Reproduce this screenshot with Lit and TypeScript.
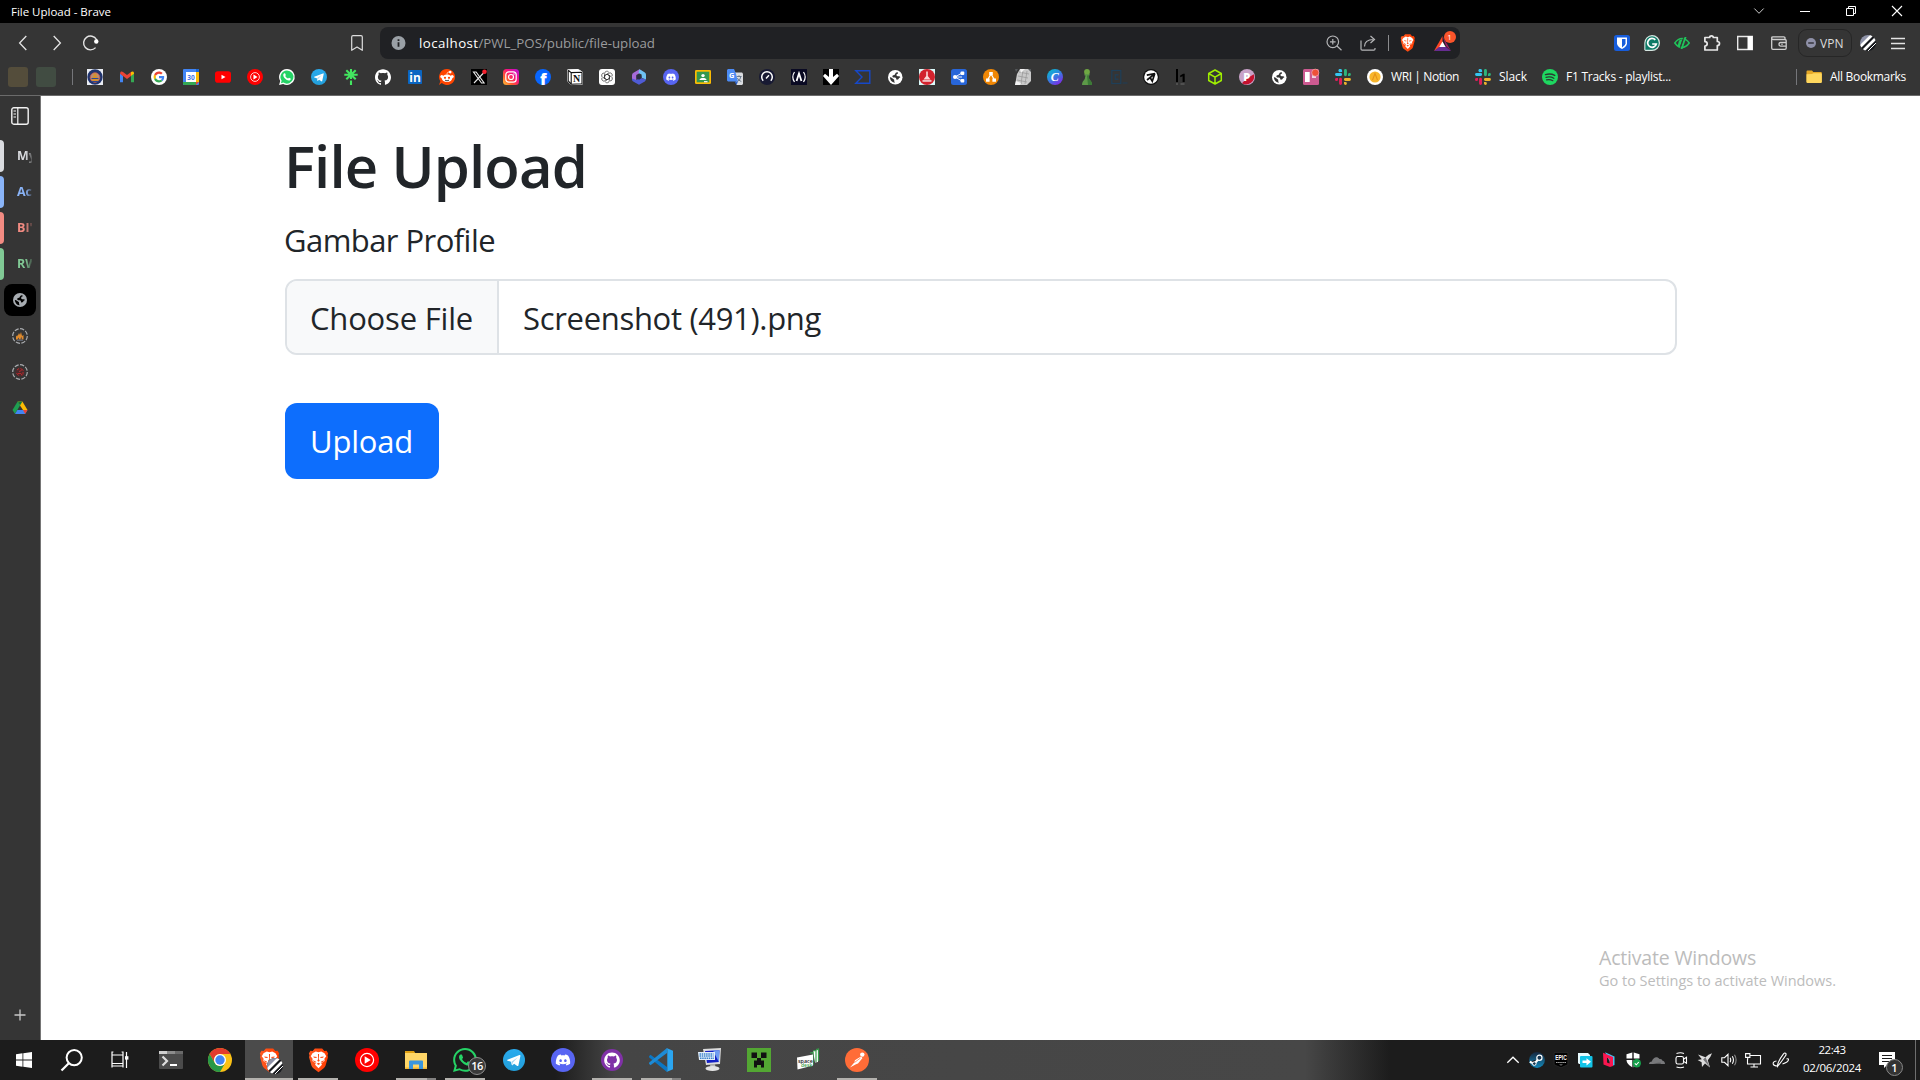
import { LitElement, html, svg, css, nothing } from "lit";
import type { SVGTemplateResult, TemplateResult } from "lit";
import { customElement, property } from "lit/decorators.js";
import { classMap } from "lit/directives/class-map.js";

/** Inline run of text whose tracking is adjusted so that it takes a given width. */
@customElement("fit-text")
class FitText extends LitElement {
  @property({ type: Number }) w = 0;

  static styles = css`
    :host {
      display: inline-block;
      white-space: pre;
    }
  `;

  firstUpdated() {
    const n = (this.textContent ?? "").length;
    const natural = this.getBoundingClientRect().width;
    if (this.w && n) this.style.letterSpacing = `${((this.w - natural) / n).toFixed(3)}px`;
  }

  render() {
    return html`<slot></slot>`;
  }
}

const icon = (w: number, h: number, box: string, body: SVGTemplateResult): TemplateResult =>
  html`<svg width=${w} height=${h} viewBox=${box}>${body}</svg>`;

/* ---------- shared brand marks ---------- */

const GITHUB =
  "M12 .297c-6.63 0-12 5.373-12 12 0 5.303 3.438 9.8 8.205 11.385.6.113.82-.258.82-.577 0-.285-.01-1.04-.015-2.04-3.338.724-4.042-1.61-4.042-1.61C4.422 18.07 3.633 17.7 3.633 17.7c-1.087-.744.084-.729.084-.729 1.205.084 1.838 1.236 1.838 1.236 1.07 1.835 2.809 1.305 3.495.998.108-.776.417-1.305.76-1.605-2.665-.3-5.466-1.332-5.466-5.93 0-1.31.465-2.38 1.235-3.22-.135-.303-.54-1.523.105-3.176 0 0 1.005-.322 3.3 1.23.96-.267 1.98-.399 3-.405 1.02.006 2.04.138 3 .405 2.28-1.552 3.285-1.23 3.285-1.23.645 1.653.24 2.873.12 3.176.765.84 1.23 1.91 1.23 3.22 0 4.61-2.805 5.625-5.475 5.92.42.36.81 1.096.81 2.22 0 1.606-.015 2.896-.015 3.286 0 .315.21.69.825.57C20.565 22.092 24 17.592 24 12.297c0-6.627-5.373-12-12-12";
const WHATSAPP =
  "M17.472 14.382c-.297-.149-1.758-.867-2.03-.967-.273-.099-.471-.148-.67.15-.197.297-.767.966-.94 1.164-.173.199-.347.223-.644.075-.297-.15-1.255-.463-2.39-1.475-.883-.788-1.48-1.761-1.653-2.059-.173-.297-.018-.458.13-.606.134-.133.298-.347.446-.52.149-.174.198-.298.298-.497.099-.198.05-.371-.025-.52-.075-.149-.669-1.612-.916-2.207-.242-.579-.487-.5-.669-.51-.173-.008-.371-.01-.57-.01-.198 0-.52.074-.792.372-.272.297-1.04 1.016-1.04 2.479 0 1.462 1.065 2.875 1.213 3.074.149.198 2.096 3.2 5.077 4.487.709.306 1.262.489 1.694.625.712.227 1.36.195 1.871.118.571-.085 1.758-.719 2.006-1.413.248-.694.248-1.289.173-1.413-.074-.124-.272-.198-.57-.347m-5.421 7.403h-.004a9.87 9.87 0 01-5.031-1.378l-.361-.214-3.741.982.998-3.648-.235-.374a9.86 9.86 0 01-1.51-5.26c.001-5.45 4.436-9.884 9.888-9.884 2.64 0 5.122 1.03 6.988 2.898a9.825 9.825 0 012.893 6.994c-.003 5.45-4.437 9.884-9.885 9.884m8.413-18.297A11.815 11.815 0 0012.05 0C5.495 0 .16 5.335.157 11.892c0 2.096.547 4.142 1.588 5.945L.057 24l6.305-1.654a11.882 11.882 0 005.683 1.448h.005c6.554 0 11.89-5.335 11.893-11.893a11.821 11.821 0 00-3.48-8.413Z";
const DISCORD =
  "M20.317 4.37a19.79 19.79 0 00-4.885-1.515.074.074 0 00-.079.037c-.21.375-.444.865-.608 1.25-1.845-.277-3.68-.277-5.487 0-.164-.394-.406-.875-.618-1.25a.077.077 0 00-.079-.037 19.736 19.736 0 00-4.885 1.515.07.07 0 00-.032.028C.533 9.046-.319 13.58.099 18.058a.082.082 0 00.031.056c2.053 1.508 4.041 2.423 5.993 3.03a.078.078 0 00.084-.028c.462-.63.873-1.295 1.226-1.994a.076.076 0 00-.042-.106c-.652-.248-1.274-.55-1.872-.892a.077.077 0 01-.008-.128c.126-.094.252-.192.372-.291a.074.074 0 01.078-.01c3.927 1.793 8.18 1.793 12.061 0a.074.074 0 01.079.009c.12.099.246.198.373.292a.077.077 0 01-.007.128 12.299 12.299 0 01-1.873.891.077.077 0 00-.041.107c.36.698.772 1.363 1.225 1.993a.076.076 0 00.084.029c1.961-.607 3.95-1.522 6.002-3.03a.077.077 0 00.032-.055c.5-5.177-.838-9.674-3.549-13.66a.061.061 0 00-.031-.029zM8.02 15.331c-1.183 0-2.157-1.086-2.157-2.419 0-1.333.956-2.419 2.157-2.419 1.211 0 2.176 1.095 2.157 2.419 0 1.333-.956 2.419-2.157 2.419zm7.975 0c-1.183 0-2.157-1.086-2.157-2.419 0-1.333.955-2.419 2.157-2.419 1.211 0 2.176 1.095 2.157 2.419 0 1.333-.946 2.419-2.157 2.419Z";

const brave = (s: number, id: string) =>
  icon(s, s * 1.17, "1 0 22 27", svg`
    <defs><linearGradient id=${id} x1="0" x2="1"><stop offset="0" stop-color="#ff5a22"/><stop offset="1" stop-color="#ff3c00"/></linearGradient></defs>
    <path fill="url(#${id})" d="M8 .5h8l2.4 2.7 2.5-.3L22.600 6l-.7 2 .5 2.200L19.700 19.600q-.5 1.600-2 2.600L12 26.600l-5.700-4.400q-1.500-1-2-2.600L1.600 10.200l.5-2.200-.7-2 1.700-3.100 2.500.3z"/>
    <path fill="#fff" d="M12 4.800l3-.9 3.600 1.900L20.500 9l-2 2.800.2 2.600-3.700 2.300.8 1.700-3.800 3.900-3.800-3.900.8-1.700-3.700-2.300.2-2.600L3.500 9l1.900-3.200L9 3.900z"/>
    <path fill="#ff4a12" d="M6.200 9.300l4 .7-.6 1-2.600-.4zM17.800 9.300l-4 .7.600 1 2.600-.4zM11.400 6.500h1.200l-.2 6 1 1.600-1.400 1-1.400-1 1-1.600zM10 17.300l2-1 2 1-2 1.400zM6 13.500l3 1.300.5 1.500-3-1.500zM18 13.500l-3 1.300-.5 1.500 3-1.500z"/>`);

const ytMusic = (s: number) =>
  icon(s, s, "0 0 24 24", svg`<circle cx="12" cy="12" r="12" fill="#f00"/>
    <circle cx="12" cy="12" r="6.600" fill="none" stroke="#fff" stroke-width="1.200"/><path fill="#fff" d="M9.700 8.300v7.400l6-3.700z"/>`);

const telegram = (s: number, id: string) =>
  icon(s, s, "0 0 24 24", svg`
    <defs><linearGradient id=${id} x1="0" x2="0" y1="0" y2="1"><stop offset="0" stop-color="#2aabee"/><stop offset="1" stop-color="#229ed9"/></linearGradient></defs>
    <circle cx="12" cy="12" r="12" fill="url(#${id})"/>
    <path fill="#fff" d="M4.800 11.800L18 6.600c.7-.2 1.200.2 1 1.100l-2.200 10.200c-.2.800-.7.900-1.300.6l-3.400-2.500-1.700 1.600c-.4.400-.8.300-.9-.3l-.8-3.400-3.700-1.200c-.7-.2-.7-.6-.2-.9z"/>
    <path fill="#a9d5ee" d="M9.200 14l7-5-5.600 6-.4 2.600z"/>`);

const discord = (s: number) =>
  icon(s, s, "0 0 24 24", svg`<circle cx="12" cy="12" r="12" fill="#5865f2"/>
    <path transform="translate(4.800 4.900) scale(.6)" fill="#fff" d=${DISCORD}/>`);

const slack = () =>
  icon(16, 16, "0 0 16 16", svg`
    <path fill="#36c5f0" d="M4.300 0h1.400a1.500 1.500 0 0 1 1.400 1.500v1.400H5.700A1.400 1.400 0 0 1 4.300 0zM1.500 4h4.200a1.450 1.450 0 0 1 0 2.900H1.500a1.450 1.450 0 0 1 0-2.900z"/>
    <path fill="#2eb67d" d="M9 1.500a1.450 1.450 0 0 1 2.900 0v4.200a1.450 1.450 0 0 1-2.900 0zM13 5.600a1.450 1.450 0 1 1 1.500 1.300H13z"/>
    <path fill="#ecb22e" d="M10.400 9.100h4.100a1.450 1.450 0 0 1 0 2.900h-4.100a1.450 1.450 0 0 1 0-2.900zM9 13h1.400A1.450 1.450 0 1 1 9 14.500z"/>
    <path fill="#e01e5a" d="M4.100 10.300a1.450 1.450 0 0 1 2.900 0v4.200a1.450 1.450 0 0 1-2.900 0zM0 10.500a1.450 1.450 0 0 1 1.500-1.400H3v1.400a1.500 1.500 0 0 1-3 0z"/>`);

const stripes = (s: number) =>
  icon(s, s, "0 0 16 16", svg`
    <defs><clipPath id="ball"><circle cx="8" cy="8" r="8"/></clipPath></defs>
    <g clip-path="url(#ball)"><rect width="16" height="16" fill="#17191d"/><path fill="#8f93a8" d="M0 0h12L0 12z"/>
    <path stroke="#fff" stroke-width="2.800" d="M-1 13L13-1M2.500 16.500L17 2"/><path stroke="#fff" stroke-width="1" d="M7 17L18 6"/></g>`);

const globe = (s: number, color: string, water: string) =>
  icon(s, s, "0 0 16 16", svg`<circle cx="8" cy="8" r="8" fill=${color}/>
    <path fill=${water} d="M10.600 2.300Q8 3 7.800 4.400T5.600 5.800q-1.300.6-.6 1.800.8.800 2.300.6 1.500-.1 1.700 1.100l.3 1.200q.9.600 2.100-.2.600-1.800 2.300-2.300-.3-1-1.700-1H10.600q-1.500-.3-1.300-1.700.2-1 1.700-1.200zM2 8.300q.6-.5 1.600 0l2.600 1.800q.9.500.7 1.700t.9 2.300q-4.800-.4-5.800-5.800z"/>`);

/* ---------- bookmarks bar ---------- */

const b = (body: SVGTemplateResult) => icon(16, 16, "0 0 16 16", body);

const bookmarks: TemplateResult[] = [
  b(svg`<rect width="16" height="16" fill="#e9ecf2"/><circle cx="8" cy="8" r="7.700" fill="#21356e"/><circle cx="8" cy="8.500" r="4.800" fill="#b98d78"/><circle cx="8" cy="8.500" r="4.800" fill="none" stroke="#c9584b" stroke-width=".8"/><path fill="#d6922a" d="M6.500 4.500h3v3l1.300 1v3.500H5.200V8.500l1.300-1z"/><path stroke="#2d4694" d="M4.500 9.500h7M5 12.500h6"/>`),
  b(svg`<path fill="#4285f4" d="M1 13.200V4.500l3 2.300v6.400z"/><path fill="#34a853" d="M12 13.200V6.800l3-2.300v8.700z"/><path fill="#ea4335" d="M1.500 3C2.500 2 3.400 2.600 4 3l4 3 4-3v4l-4 3-4-3-3-2.300z"/><path fill="#fbbc04" d="M12 3c1.500-1.200 3-.5 3 1.200v.5L12 7z"/>`),
  b(svg`<circle cx="8" cy="8" r="8" fill="#fff"/><g transform="translate(2.600 2.600) scale(.225)"><path fill="#ea4335" d="M24 9.500c3.540 0 6.710 1.220 9.210 3.600l6.850-6.850C35.900 2.380 30.470 0 24 0 14.620 0 6.510 5.380 2.560 13.220l7.980 6.190C12.430 13.720 17.740 9.500 24 9.500z"/><path fill="#4285f4" d="M46.980 24.550c0-1.570-.15-3.090-.38-4.550H24v9.020h12.940c-.58 2.960-2.260 5.480-4.780 7.180l7.730 6c4.510-4.180 7.090-10.360 7.090-17.650z"/><path fill="#fbbc05" d="M10.530 28.590c-.48-1.450-.76-2.990-.76-4.590s.27-3.140.76-4.590l-7.980-6.190C.92 16.460 0 20.120 0 24c0 3.880.92 7.540 2.560 10.780l7.970-6.190z"/><path fill="#34a853" d="M24 48c6.480 0 11.930-2.130 15.890-5.810l-7.730-6c-2.150 1.450-4.920 2.300-8.160 2.300-6.260 0-11.570-4.220-13.470-9.910l-7.980 6.190C6.510 42.620 14.620 48 24 48z"/></g>`),
  b(svg`<rect width="16" height="16" rx="1" fill="#4285f4"/><path fill="#fbbc04" d="M13 3h3v10h-3z"/><path fill="#1967d2" d="M13 0h2l1 1v2h-3z"/><path fill="#34a853" d="M0 13h13v3H1l-1-1z"/><path fill="#ea4335" d="M13 13h3l-3 3z"/><path fill="#fff" d="M3 3h10v10H3z"/><text x="8" y="10.700" class="cal">30</text>`),
  b(svg`<rect y="2.300" width="16" height="11.400" rx="2.800" fill="#f00"/><path fill="#fff" d="M6.500 5.700v4.600l4-2.300z"/>`),
  ytMusic(16),
  b(svg`<path fill="#fff" d="M8 .1a7.900 7.900 0 1 1-3.900 14.800L.1 16l1.100-4A7.900 7.900 0 0 1 8 .1z"/><path fill="#25d366" d="M8 1.400a6.600 6.600 0 1 1-3.600 12.200L1.900 14.200l.7-2.500A6.600 6.600 0 0 1 8 1.400z"/><path fill="#fff" d="M5.400 4.200c.5-.1.700 0 .9.500l.5 1.200c.1.400-.7 1-.6 1.200a5 5 0 0 0 2.700 2.400c.3.100.8-.9 1.100-.8l1.600.8c.5.300-.1 1.800-1.300 2-1.400.2-3.200-.8-4.300-2-1-1-2-2.500-1.700-3.800.1-.7.600-1.400 1.100-1.500z"/>`),
  telegram(16, "tgS"),
  b(svg`<path stroke="#43e660" stroke-width="2.100" d="M8 0v10M1.300 5.700h13.400M3.300 1.200l9.400 9M12.700 1.200l-9.400 9M8 11.500V16"/>`),
  icon(16, 16, "0 0 24 24", svg`<path fill="#fff" d=${GITHUB}/>`),
  b(svg`<rect x="1" y="1" width="14" height="14" rx=".8" fill="#0a66c2"/><text x="8" y="12.500" class="li">in</text>`),
  b(svg`<path fill="#ff4500" d="M8 0a8 8 0 1 1-5.200 14L0 16l1.300-3.700A8 8 0 0 1 8 0z"/><ellipse cx="8" cy="9.300" rx="5.200" ry="3.700" fill="#fff"/><circle cx="2.800" cy="7.500" r="1.500" fill="#fff"/><circle cx="13.200" cy="7.500" r="1.500" fill="#fff"/><circle cx="11.200" cy="3.100" r="1.300" fill="#fff"/><path fill="none" stroke="#fff" stroke-width=".8" d="M8 5.500c0-1.800.8-2.600 2.500-2.400"/><circle cx="6" cy="8.800" r="1.100" fill="#ff4500"/><circle cx="10" cy="8.800" r="1.100" fill="#ff4500"/><path fill="none" stroke="#1b1b1b" stroke-width=".8" d="M6 11.200q2 1.200 4 0"/>`),
  b(svg`<rect width="16" height="16" fill="#000"/><path fill="none" stroke="#e7e7e7" stroke-width="1.100" d="M2.500 3h2.600l8 11h-2.600zM12.500 4L3 14"/><circle cx="13.500" cy="2.800" r="2.300" fill="#f4212e"/>`),
  b(svg`<defs><linearGradient id="ig" x1="0" y1="1" x2="1" y2="0"><stop offset="0" stop-color="#ffc83a"/><stop offset=".3" stop-color="#ff5a2c"/><stop offset=".6" stop-color="#f9127c"/><stop offset="1" stop-color="#b10fe0"/></linearGradient></defs><rect width="16" height="16" rx="3.500" fill="url(#ig)"/><rect x="2.800" y="2.800" width="10.400" height="10.400" rx="3" fill="none" stroke="#fff" stroke-width="1.200"/><circle cx="8" cy="8" r="2.500" fill="none" stroke="#fff" stroke-width="1.200"/><circle cx="11" cy="5" r=".7" fill="#fff"/>`),
  b(svg`<circle cx="8" cy="8" r="8" fill="#0866ff"/><text x="8.400" y="15.800" class="fb">f</text>`),
  b(svg`<path fill="#fff" stroke="#fff" d="M.7.800l10.500-.3L15.400 3v12.200L4 15.600.7 12z"/><path fill="#fff" stroke="#111" stroke-width="1.100" d="M1.200 1.200l3 2.400 11-.4M4.200 3.600v11.600M1.200 1.200v10.600l3 3.400 10.800-.5V3.300"/><text x="9.700" y="12.900" class="no">N</text>`),
  b(svg`<rect width="16" height="16" rx="3" fill="#fff"/><g fill="none" stroke="#333" stroke-width=".65">${[0, 60, 120, 180, 240, 300].map((a) => svg`<path transform="rotate(${a} 8 8)" d="M5.600 8V4.600a2.300 2.300 0 0 1 4.300-1.200M5.600 6.600L8 5.200l3 1.700"/>`)}</g>`),
  b(svg`<path fill="#a66bd8" d="M8.500.3L2.500 3.700Q1 4.600 1 6.300v4.200l4.300 2.200V6l6.300-3.400z"/><path fill="#4f5bd5" d="M1 9.500v1q0 1.300 1.200 2L8 15.700l5.800-3.300q1-.7 1.100-1.900L9.500 8.700 5.300 11z"/><path fill="#6ec1f2" d="M8.500.3l5 2.900Q15 4.100 15 5.800v4.700l-4.400-1.700V5.600L7.500 4z"/><path fill="#2b2d42" d="M8 5.300l2.400 1.400v2.600L8 10.700 5.600 9.300V6.700z"/>`),
  discord(16),
  b(svg`<rect y="1" width="16" height="14" rx="1.300" fill="#fbbc04"/><path fill="#34984f" d="M1.700 2.700h12.600v10.600H1.700z"/><circle cx="8" cy="6.600" r="1.700" fill="#fff"/><path fill="#fff" d="M4.500 11c0-2.600 7-2.600 7 0z"/><path fill="#eee" d="M9 12h3.500v1.300H9z"/>`),
  b(svg`<path fill="#dadce0" d="M7 3.500h8l1 1V15l-1 1H9.500z"/><path stroke="#5f6f86" stroke-width=".9" fill="none" d="M9.500 7.500h5M12 6.300v1.200M10.500 12.500q3-1.500 3.300-5M10.300 9q1 2.500 4 3.500"/><path fill="#4c8bf5" d="M1 0h6l1.700 4L11 12.500H1l-1-1V1z"/><path fill="#3063c8" d="M7.500 12.500h3.500L9.500 16z"/><text x="4.600" y="9.200" class="gt">G</text>`),
  b(svg`<circle cx="8" cy="8" r="8" fill="#181a33"/><path fill="none" stroke="#fff" stroke-width="1.500" d="M4.200 11.800A5.300 5.300 0 1 1 11.800 11.800"/><path stroke="#fff" stroke-width="1.400" d="M7 9.500l3-3.300"/>`),
  b(svg`<rect width="16" height="16" fill="#0a0a23"/><g fill="none" stroke="#fff" stroke-width="1.200"><path d="M3.500 3q-3.400 5 0 10M12.500 3q3.400 5 0 10"/><path stroke-width="1.800" d="M5.600 12Q6.500 9 8 4.500 9.500 9 10.400 12"/></g>`),
  b(svg`<rect width="16" height="16" fill="#000"/><path fill="#fff" d="M6 0h4v8l4-3.300L16 7 8 16 0 7l2-2.300L6 8z"/>`),
  b(svg`<path fill="none" stroke="#1648c8" stroke-width="1.400" d="M.8 1.700h14v12.600h-14l6.200-6.300z"/>`),
  globe(14.5, "#fff", "#353535"),
  b(svg`<rect width="16" height="16" fill="#d9fafa"/><circle cx="8" cy="8" r="8" fill="#d2222d"/><path fill="#fbd9d9" d="M7.200 2.500h1.600v4.500l2.700 3.500h-7L7.200 7z"/><path fill="#fff" d="M3.500 11.300h9v1.300h-9z"/>`),
  b(svg`<rect width="16" height="16" rx="2.500" fill="#2866d9"/><path stroke="#fff" stroke-width=".9" d="M4 8l7-4M4 8h7M4 8l7 4"/><circle cx="4" cy="8" r="2" fill="#fff"/><rect x="9.500" y="2.500" width="3.800" height="3.500" rx="1" fill="#fff"/><rect x="9.500" y="10" width="3.800" height="3.500" rx="1" fill="#fff"/>`),
  b(svg`<circle cx="8" cy="8" r="8" fill="#f08705"/><path stroke="#fff" stroke-width="1.200" d="M8 5l-3.500 6M8 5l3.500 6"/><path fill="#fff" d="M6.200 3h3.600v3.200H6.200zM3 9.500h3.600v3.200H3zM9.400 9.500H13v3.200H9.400z"/>`),
  b(svg`<path fill="#c9c9c9" d="M5 0h11v12l-4 4H0L2 5z"/><path stroke="#9b9b9b" stroke-width=".8" d="M4 3l10 2M3 7l10 2M2 11l10 2M8 1L6 15M12 2l-2 13"/><path fill="#f3f3f3" d="M5 0h5l-4 4zM1 12l5 2-1 2H0z"/><path fill="#55595c" d="M0 0h3L1 3zM13 0h3v3z"/>`),
  b(svg`<defs><linearGradient id="cv" x1="0" y1="0" x2=".7" y2="1"><stop offset="0" stop-color="#00c4cc"/><stop offset=".5" stop-color="#2f86e0"/><stop offset="1" stop-color="#7d2ae8"/></linearGradient></defs><circle cx="8" cy="8" r="8" fill="url(#cv)"/><text x="7.800" y="12.200" class="cv">C</text>`),
  b(svg`<circle cx="8" cy="3" r="2.900" fill="#6fa843"/><path fill="#5d9948" d="M5.500 5h5v1.500H9.500q0 3.500 2.800 6.200.7 1.300.7 3.300H3q0-2 .7-3.300Q6.500 10 6.500 6.500h-1z"/><path fill="#3b7a36" d="M8 6.500h1.500q0 3.500 2.800 6.200.7 1.300.7 3.300H9z"/>`),
  b(svg`<rect x=".8" y="1.500" width="9" height="13" fill="none" stroke="#1f3f58" stroke-width="1.200"/><path fill="none" stroke="#1f3f58" stroke-width="1.200" d="M7.500 5.800h-3.300v4.400h3.300M11.500 14h5"/>`),
  b(svg`<circle cx="8" cy="8" r="8" fill="#111"/><circle cx="8" cy="8" r="6.800" fill="#fff"/><path fill="none" stroke="#111" stroke-width="1.700" d="M3.800 6.200L12 4.600 4 11M11.700 4.800L9.300 12.300 7.200 8.800"/>`),
  b(svg`<path fill="#000" d="M1 0h2v13H1zM5.200 6.500l3-1.800h1.500V13H7.600V7.300l-2.400.9z"/><path stroke="#5a5a5a" stroke-width="1.500" d="M1 15h2M5.500 15h4"/>`),
  b(svg`<g fill="none" stroke="#9fef00" stroke-width="1.500" stroke-linejoin="round"><path d="M8 1l6.300 3.500v7L8 15l-6.300-3.500v-7zM1.700 4.500L8 8.200l6.300-3.700M8 8.200V15"/></g>`),
  b(svg`<circle cx="8" cy="8" r="8" fill="#c8a2c8"/><path fill="#c4122f" d="M14.800 5.200A8 8 0 0 1 3 14.200L7 10z"/><text x="7.800" y="12" class="pp">P</text>`),
  globe(14.5, "#fff", "#353535"),
  b(svg`<rect width="16" height="16" rx="1.500" fill="#cd5a91"/><path fill="#fff" d="M2 3h4.700v10H2z"/><path fill="#f2d3e2" d="M9 3h4v6H9z"/><circle cx="12.300" cy="3.700" r="3.600" fill="#ee5138" stroke="#f1b8c2" stroke-width=".6"/>`),
  slack(),
];

const notionBadge = b(svg`<circle cx="8" cy="8" r="8" fill="#fff"/><circle cx="8" cy="8" r="5.600" fill="#f8b62d"/><path fill="none" stroke="#e6931a" stroke-width="1.100" d="M5.500 11L8 4.500 10.500 11"/>`);
const spotify = b(svg`<circle cx="8" cy="8" r="8" fill="#1ed760"/><g fill="none" stroke="#2b3b31" stroke-linecap="round"><path stroke-width="1.500" d="M3.500 5.600q5-1.500 9.200.8"/><path stroke-width="1.300" d="M4 8.400q4.300-1.200 7.800.9"/><path stroke-width="1.100" d="M4.500 10.900q3.500-.9 6.400.8"/></g>`);
const folder = b(svg`<path fill="#e5a827" d="M.5 2.500q0-1 1-1H6l1.300 1.600H15q.8 0 .8.900V13H.5z"/><path fill="#ffd75e" d="M.5 5.200L6 4.900l1.500-.7H15q.8 0 .8.800v8.200q0 .8-.8.800H1.300q-.8 0-.8-.8z"/>`);

/* ---------- taskbar ---------- */

const t = (body: SVGTemplateResult) => icon(24, 24, "0 0 24 24", body);

interface Task {
  art: TemplateResult;
  run?: "one" | "many";
  active?: boolean;
  extra?: TemplateResult;
}

const systemTasks: TemplateResult[] = [
  icon(16, 16, "0 0 16 16", svg`<path fill="#fff" d="M0 2.200l6.500-.9v6.300H0zM7.300 1.200L16 0v7.600H7.300zM0 8.400h6.500v6.300L0 13.800zM7.300 8.400H16V16l-8.700-1.200z"/>`),
  icon(24, 24, "0 0 24 24", svg`<circle cx="14.200" cy="9.600" r="7.600" fill="none" stroke="#fff" stroke-width="2"/><path stroke="#fff" stroke-width="2.200" d="M8.800 15.200L1.500 22.500"/>`),
  icon(18, 18, "0 0 18 18", svg`<g fill="none" stroke="#fff" stroke-width="1.200"><path d="M1 4h11v8.500H1zM1 4V1M12 4V1M.400 1h2M10.600 1h2M1 12.500v4M12 12.500v4M1 15h11M15.500 1v16M4 4"/></g><path fill="#fff" d="M14 5.200h3.400v3.400H14z"/>`),
];

const tasks: Task[] = [
  { art: t(svg`<rect y="3" width="24" height="18" rx="1" fill="#4b4b4b"/><path fill="#cfcfcf" d="M0 3h8v3H0z"/><path fill="#8c8c8c" d="M8 3h8v3H8z"/><path fill="#6a6a6a" d="M16 3h8v3h-8z"/><path fill="none" stroke="#ddd" stroke-width="2.200" d="M3.500 8.500L8 13l-4.500 4.500"/><path stroke="#fff" stroke-width="2" d="M11 17h7"/>`) },
  { art: t(svg`<circle cx="12" cy="12" r="12" fill="#fbc116"/><path fill="#e33b2e" d="M1.600 6A12 12 0 0 1 22.400 6H12a6 6 0 0 0-5.200 9z"/><path fill="#279847" d="M1.600 6A12 12 0 0 0 12 24l5.200-9a6 6 0 0 1-10.400 0z"/><circle cx="12" cy="12" r="6" fill="#fff"/><circle cx="12" cy="12" r="4.700" fill="#4285f4"/>`) },
  { art: brave(21, "bvA"), active: true, extra: html`<span class="overlay">${stripes(16)}</span>` },
  { art: brave(21, "bvB"), run: "one" },
  { art: ytMusic(24) },
  { art: t(svg`<path fill="#e0a013" d="M1 3h9l1.500 2.500H1z"/><path fill="#ffd667" d="M1 5h22v16H1z"/><path fill="#f2b633" d="M1 19.500h22V21H1z"/><path fill="#3a96dd" d="M5 13.500q0-1 1-1h12q1 0 1 1V21h-4v-4.500H9V21H5z"/>`), run: "many" },
  { art: icon(24, 24, "0 0 24 24", svg`<path fill="#25d366" d=${WHATSAPP}/>`), run: "one", extra: html`<span class="count">16</span>` },
  { art: telegram(22, "tgL") },
  { art: discord(24) },
  { art: t(svg`<circle cx="12" cy="12" r="11" fill="#8031a7"/><path transform="translate(4.200 4.200) scale(.65)" fill="#fff" d=${GITHUB}/>`), run: "one" },
  { art: t(svg`<path fill="#0b77c4" d="M0 8.200l1.500-1.500L18 19v5L.2 9.500z"/><path fill="#1d8bd6" d="M0 15.800l1.500 1.500L18 5V0L.2 14.500z"/><path fill="#2ba5f0" d="M17.500 0L24 2.800v18.400L17.500 24q.8-.7.800-2V2q0-1.300-.8-2z"/>`), run: "many" },
  { art: t(svg`<path fill="#dcdcdc" d="M5 1l18-1-1 16-14 1z"/><path fill="#1420c4" d="M7 3l14.500-.8L20.800 14 9 15z"/><path fill="#6f9cf0" d="M15 2.600l6.500-.4L20.800 14z"/><path fill="#e4effa" d="M0 4h17v8H1z"/><path stroke="#3b83cc" stroke-width="1.600" stroke-dasharray="1.500 .7" d="M1.500 6h14M1.500 8h14M2 10.200h14"/><path fill="#b9b9b9" d="M12 16.500l5-.3.500 3h-5z"/><ellipse cx="14.500" cy="20.500" rx="7" ry="2.600" fill="#e3e3e3"/>`) },
  { art: t(svg`<path fill="#53a733" d="M0 0h24v24H0z"/><path fill="#111" d="M4.500 4.500H10V10H4.500zM14 4.500h5.500V10H14zM10 10h4v2.500h3V19.500h-3v-2.500h-4v2.500H7v-7h3z"/>`) },
  { art: t(svg`<path fill="#fff" d="M17 3l5-1v12l-3 .6"/><path fill="none" stroke="#37a04b" stroke-width="1.200" d="M14 5l3-.5V17M17 3l3-.5V14M20 1.500l2.500-.5v12"/><path fill="#fff" d="M1 9.500l16-3v11L1.500 21.500z"/><text x="2" y="14.500" class="sd1">space</text><text x="5" y="19" class="sd2">desk</text>`) },
  { art: t(svg`<circle cx="12" cy="12" r="12" fill="#ff6c37"/><circle cx="17.300" cy="6.600" r="2.200" fill="#fff"/><path fill="#fff" d="M16 8.500l1.500 1.500-4.500 5.500-2 .7L5 19.500l4.500-5.300.4-1.900z"/><path stroke="#ff6c37" stroke-width=".7" d="M9.500 14.500l6-4.500"/>`), run: "one" },
];

const tray: TemplateResult[] = [
  b(svg`<path fill="none" stroke="#fff" stroke-width="1.300" d="M2.300 10.800L8 5.200l5.700 5.600"/>`),
  b(svg`<defs><linearGradient id="st" x1="0" y1="0" x2="0" y2="1"><stop offset="0" stop-color="#16283f"/><stop offset="1" stop-color="#1387b8"/></linearGradient></defs><circle cx="8" cy="8" r="7.900" fill="url(#st)"/><path stroke="#fff" stroke-width="2.300" d="M.8 9.700l4.500 2 4-4.500"/><circle cx="10.400" cy="5.700" r="2.600" fill="#15354f" stroke="#fff" stroke-width="1.200"/><circle cx="5.300" cy="11.600" r="1.800" fill="#15354f" stroke="#fff"/>`),
  b(svg`<path fill="#000" stroke="#3c3c3c" stroke-width=".5" d="M1.200.7h13.600v12L8 15.700l-6.800-3z"/><text x="8" y="8" class="ep" textLength="11.600" lengthAdjust="spacingAndGlyphs">EPIC</text><path stroke="#a5a5a5" stroke-width="1.200" stroke-dasharray="1.600 .5" d="M3 10.500h10"/><path fill="#aaa" d="M6 12.600h4l-2 1z"/>`),
  b(svg`<path fill="#e8fbff" d="M1 1h10l2 2v3H5v6H2l-1-1z"/><rect x="3" y="4" width="12.500" height="11.500" rx="1" fill="#12c4e8"/><path fill="#fff" d="M5.500 8.600h4V6.200L14 9.800l-4.500 3.600V11h-4z"/>`),
  b(svg`<path fill="#45c1f0" d="M4 .300l9.500 4.200v8.500L11 14z"/><path fill="#f9164f" d="M2 .8L12 5v9l-3 1-6.500-2.500zM6 5.800v4.700l2.500 1V7z" fill-rule="evenodd"/>`),
  b(svg`<path fill="#fff" d="M8 .2l6.500 2V8c0 3.500-3.500 6-6.500 7.500C5 14 1.500 11.500 1.500 8V2.200z"/><path stroke="#1c1c1c" stroke-width="1.400" d="M8 0v16M1 7.300h14"/><circle cx="11.800" cy="11.300" r="4.200" fill="#15a04a"/><path fill="none" stroke="#fff" stroke-width="1.100" d="M9.800 11.300l1.500 1.500 2.500-2.800"/>`),
  b(svg`<path fill="#78797b" d="M0 12c0-1.800 1.200-2.500 2.800-2.600C4 5.500 8 3.600 10.500 7c1.800-.4 2.800.8 3 1.800 1.500.2 2.500 1.200 2.500 3.200z"/><path fill="#57585a" d="M4 12c3-1 6-1.500 8-1.200l-.4 1.200z"/>`),
  b(svg`<g fill="none" stroke="#fff" stroke-width="1.100"><rect x="3" y="4.500" width="7.500" height="7.500" rx="1.800"/><path d="M10.500 7.200l3-1.900v6l-3-1.900M3.500 1.500q4-1.400 7.500 0M3.500 15q4 1.400 7.500 0"/></g>`),
  b(svg`<path fill="#dcdcdc" d="M15 1.200l-3.500 1.600-3 2.400L1 2.500l3.800 4.800L.6 8l4 2.200L5 15l3-3.400 5 3.900-2.200-7.300 2.600-3.400z"/><path fill="#77777a" d="M8.500 5.200l-2.400 2.300 1.800 2L13 15.500z"/>`),
  b(svg`<g fill="none" stroke="#fff" stroke-width="1.100"><path d="M.8 5.700h2.700L7 2.300v11.400L3.500 10.300H.8zM9.200 5.700q1.200 2.300 0 4.600"/><path d="M11.300 4.200q2.300 3.800 0 7.600"/><path stroke="#8c8c8c" d="M13.500 2.700q3.200 5.300 0 10.600"/></g>`),
  b(svg`<g fill="none" stroke="#fff" stroke-width="1.100"><path d="M5.500 3.500h10v8.500H2.500V7M9 12v3M5.500 15h7.500M.6 1.600h4.300v3.800H.6zM2.700 5.400v2"/></g>`),
];

@customElement("app-root")
class AppRoot extends LitElement {
  static styles = css`
    :host {
      display: block;
      width: 1920px;
      height: 1080px;
      overflow: hidden;
      font-family: "Open Sans", "Noto Sans", sans-serif;
      color: #fff;
    }
    svg { display: block; flex: none; overflow: visible; }
    .screen { display: flex; flex-direction: column; height: 1080px; background: #353535; }

    .titlebar { display: flex; justify-content: space-between; height: 23px; background: #000; font-size: 11.5px; line-height: 24px; padding-left: 11px; box-sizing: border-box; }
    .window-buttons { display: flex; }
    .window-buttons span { width: 46px; height: 22px; display: grid; place-items: center; }

    .nav { display: flex; align-items: center; height: 40px; flex: none; }
    .slot { display: grid; place-items: center; flex: none; }
    .history { display: flex; padding-left: 6px; width: 334px; box-sizing: border-box; }
    .history .slot { width: 34px; height: 32px; }
    .mark { width: 46px; }
    .address { display: flex; align-items: center; width: 1080px; height: 32px; background: #202124; border-radius: 8px; font-size: 13.3px; line-height: 32px; box-sizing: border-box; }
    .info { width: 39px; padding-right: 2px; box-sizing: border-box; }
    .address .path { color: #9a9b9d; }
    .address-tools { display: flex; align-items: center; margin-left: auto; }
    .w34 { width: 34px; }
    .w35 { width: 35px; }
    .w30 { width: 30px; }
    .rule-box { padding: 0 1px 0 3px; }
    .rule { width: 1px; height: 16px; background: #8b8c8e; flex: none; }
    .rewards { position: relative; width: 35px; height: 32px; display: grid; place-items: center; }
    .badge { position: absolute; left: 18.5px; top: 4px; width: 12px; height: 12px; border-radius: 6px; background: #fb542b; font-size: 8px; line-height: 12px; text-align: center; }
    .extensions { display: flex; align-items: center; margin-left: 147px; }
    .vpn { display: flex; align-items: center; gap: 4px; width: 54px; height: 28px; border: 1px solid #262626; border-radius: 9px; box-sizing: border-box; padding-left: 7px; font-size: 12px; color: #ddd; margin-left: 2px; }
    .profile { width: 32px; }
    .menu { width: 28px; }

    .bookmarks { display: flex; align-items: center; height: 28px; flex: none; padding: 0 0 4px 8px; font-size: 12px; box-sizing: content-box; }
    .swatch { width: 20px; height: 20px; border-radius: 3px; margin-right: 8px; background: #544d3b; flex: none; }
    .swatch.green { background: #414c42; margin-right: 16px; }
    .divider { width: 1px; height: 16px; background: #75767a; margin-right: 6px; flex: none; }
    .sites { display: flex; }
    .sites .slot { width: 32px; height: 16px; }
    .named { display: flex; align-items: center; gap: 8px; line-height: 20px; }
    .named.notion { margin-left: 8px; }
    .named.slack { margin-left: 16px; }
    .named.spotify { margin-left: 15px; }
    .all { display: flex; align-items: center; margin-left: auto; padding-right: 14px; }
    .all .divider { margin-right: 9px; }

    .body { display: flex; flex: 1; min-height: 0; border-top: 1px solid #6b6b6b; }
    .side { display: flex; flex-direction: column; width: 41px; border-right: 1px solid #757575; box-sizing: border-box; }
    .side-toggle { height: 40px; }
    .groups { display: flex; flex-direction: column; gap: 4px; padding-top: 4px; }
    .group { display: flex; align-items: center; height: 32px; width: 32px; overflow: hidden; font-size: 12.5px; font-weight: 700; gap: 13px; -webkit-mask-image: linear-gradient(90deg, #000 80%, rgba(0, 0, 0, .2)); mask-image: linear-gradient(90deg, #000 80%, rgba(0, 0, 0, .2)); }
    .group-name { padding-bottom: 2px; }
    .bar { width: 4px; height: 32px; border-radius: 0 4px 4px 0; flex: none; background: currentColor; }
    .grey { color: #dadce0; }
    .blue { color: #8ab4f8; }
    .red { color: #f28b82; }
    .green-t { color: #81c995; }
    .tabs { display: flex; flex-direction: column; gap: 4px; padding: 4px; }
    .tab { width: 32px; height: 32px; border-radius: 8px; }
    .tab.current { background: #000; }
    .new-tab { margin-top: auto; height: 50px; }

    .page { position: relative; flex: 1; background: #fff; color: #212529; }
    .container { width: 1392px; margin-left: 244px; font-size: 31px; }
    h1 { margin: 0 0 0 -1px; padding-top: 34px; font-size: 58px; line-height: 72px; font-weight: 600; height: 72px; }
    .label { height: 48px; line-height: 48px; margin: 14px 0 0 -1px; }
    .file { display: flex; height: 76px; border: 2px solid #dee2e6; border-radius: 12px; margin-top: 15px; overflow: hidden; box-sizing: border-box; line-height: 74px; }
    .choose { width: 212px; border-right: 2px solid #dee2e6; background: #f8f9fa; padding-left: 23px; box-sizing: border-box; }
    .chosen { padding-left: 24px; }
    .upload { display: block; margin: 48px 0 0; width: 154px; height: 76px; border: 0; border-radius: 12px; background: #0d6efd; color: #fff; font: inherit; line-height: 76px; padding: 0 1px 0 0; text-align: center; }
    .watermark { position: absolute; left: 1558px; top: 849px; color: #bcbcbc; white-space: nowrap; }
    .watermark div { font-size: 19.5px; line-height: 26px; height: 26px; }
    .watermark .small { font-size: 14.5px; line-height: 20px; }

    .taskbar { display: flex; height: 40px; flex: none; background: linear-gradient(90deg, #1c1c1c 555px, #454545 615px, #474747 1305px, #3a3a3a 1330px, #1c1c1c 1390px); }
    .system { display: flex; padding-right: 3px; }
    .system .slot { width: 48px; height: 40px; }
    .tasks { display: flex; gap: 1px; }
    .task { position: relative; display: grid; place-items: center; width: 48px; height: 40px; }
    .task.active { background: #4b4b4b; }
    .run { position: absolute; left: 4px; bottom: 0; width: 40px; height: 2px; background: #b3b1ad; }
    .active .run { left: 0; width: 48px; }
    .many .run { background: linear-gradient(90deg, #b3b1ad 31px, #828180 31px); }
    .overlay { position: absolute; left: 22px; top: 18px; }
    .count { position: absolute; left: 27px; top: 17px; width: 18px; height: 18px; border: 1px solid #8d8d8d; border-radius: 50%; background: #3a3a3a; box-sizing: border-box; font-size: 11px; line-height: 15px; text-align: center; font-weight: 600; letter-spacing: -.5px; }
    .tray { display: flex; margin-left: auto; align-items: center; }
    .tray .slot { width: 24px; height: 40px; }
    .tray .pen { margin-left: 4px; }
    .clock { width: 78px; text-align: center; font-size: 11.5px; line-height: 18px; padding: 0 0 2px; }
    .notify { position: relative; width: 44px; height: 40px; display: grid; place-items: center start; padding-left: 8px; box-sizing: border-box; }
    .notify-count { position: absolute; left: 15px; top: 19px; width: 17px; height: 17px; border: 1px solid #888; border-radius: 50%; background: #333; box-sizing: border-box; font-size: 11px; line-height: 15px; text-align: center; font-weight: 600; }
    .peek { width: 4px; height: 40px; border-left: 1px solid #6e6e6e; }

    .cal { font: 700 6.5px "Open Sans", sans-serif; fill: #3b76e8; text-anchor: middle; }
    .li { font: 700 12px "Open Sans", sans-serif; fill: #fff; text-anchor: middle; }
    .fb { font: 800 16px "Open Sans", sans-serif; fill: #fff; text-anchor: middle; }
    .no { font: 700 10px "Liberation Serif", serif; fill: #111; text-anchor: middle; }
    .gt { font: 700 7.5px "Open Sans", sans-serif; fill: #fff; text-anchor: middle; }
    .cv { font: italic 700 12px "Liberation Serif", serif; fill: #fff; text-anchor: middle; }
    .pp { font: 800 11px "Open Sans", sans-serif; fill: #fff; text-anchor: middle; }
    .sd1 { font: 600 5.4px "Open Sans", sans-serif; fill: #222; }
    .sd2 { font: 600 5px "Open Sans", sans-serif; fill: #37a04b; }
    .ep { font: 700 7.5px "Liberation Sans", sans-serif; fill: #fff; text-anchor: middle; }
  `;

  private renderTitle() {
    return html`<div class="titlebar">
      <fit-text w="100">File Upload - Brave</fit-text>
      <div class="window-buttons">
        <span>${icon(10, 10, "0 0 10 10", svg`<path fill="none" stroke="#ccc" d="M.3 2.500L5 7.300l4.700-4.800"/>`)}</span>
        <span>${icon(10, 10, "0 0 10 10", svg`<path stroke="#fff" d="M0 5.500h10"/>`)}</span>
        <span>${icon(10, 10, "0 0 10 10", svg`<path fill="none" stroke="#fff" d="M.5 2.500h7v7h-7zM2.500 2.500v-2h7v7h-2"/>`)}</span>
        <span>${icon(10, 10, "0 0 10 10", svg`<path stroke="#fff" stroke-width="1.100" d="M0 0l10 10M10 0L0 10"/>`)}</span>
      </div>
    </div>`;
  }

  private renderNav() {
    return html`<div class="nav">
      <div class="history">
        <span class="slot">${b(svg`<path fill="none" stroke="#e4e4e4" stroke-width="1.300" d="M11.300 1L4.600 8l6.700 7"/>`)}</span>
        <span class="slot">${b(svg`<path fill="none" stroke="#e4e4e4" stroke-width="1.300" d="M4.700 1l6.700 7-6.700 7"/>`)}</span>
        <span class="slot">${b(svg`<path fill="none" stroke="#e4e4e4" stroke-width="1.400" d="M12.600 12.600A6.900 6.900 0 1 1 13.500 4.500L14 7"/><circle cx="13.300" cy="6.500" r="2.200" fill="#fff"/>`)}</span>
      </div>
      <span class="slot mark">${b(svg`<path fill="none" stroke="#ddd" stroke-width="1.200" stroke-linejoin="round" d="M2.700 2q0-1.300 1.300-1.300h8q1.300 0 1.300 1.300v13.300L8 12l-5.300 3.300z"/>`)}</span>
      <div class="address">
        <span class="slot info">${icon(14, 14, "0 0 14 14", svg`<circle cx="6.500" cy="7" r="7" fill="#9aa0a6"/><path fill="#202124" d="M5.600 6.200h1.800v4.600H5.600zM5.600 3.200h1.800V5H5.600z"/>`)}</span>
        <fit-text w="59.5">localhost</fit-text><fit-text class="path" w="176.5">/PWL_POS/public/file-upload</fit-text>
        <div class="address-tools">
          <span class="slot w34">${b(svg`<g fill="none" stroke="#b5b6b8" stroke-width="1.200"><circle cx="6.800" cy="6.800" r="5.800"/><path d="M11 11l4.500 4.200M6.800 4v5.600M4 6.800h5.600"/></g>`)}</span>
          <span class="slot w34">${b(svg`<g fill="none" stroke="#b5b6b8" stroke-width="1.200"><path d="M1 5.500V14q0 1.200 1.200 1.200h11.600Q15 15.200 15 14v-1M4.500 11.500Q4.500 4.500 13.500 4.500M10.500 1l4 3.500-4 3.500"/></g>`)}</span>
          <span class="slot rule-box"><span class="rule"></span></span>
          <span class="slot w35">${brave(15.5, "bvN")}</span>
          <span class="rewards">
            ${icon(17, 15, "0 0 17 15", svg`<path fill="#ff4724" d="M8.500 0L0 15l8.500-5z"/><path fill="#9e1f63" d="M8.500 0L17 15l-5-5z"/><path fill="#662d91" d="M0 15h17l-5-4H5z"/><path fill="#fff" d="M8.500 5.500L5.300 11h6.400z"/>`)}
            <span class="badge">1</span>
          </span>
        </div>
      </div>
      <div class="extensions">
        <span class="slot w30">${b(svg`<rect width="16" height="16" rx="2.500" fill="#175ddc"/><path fill="#fff" d="M3 2.500h10v5.700q0 3.300-5 5.800-5-2.500-5-5.800z"/><path fill="#175ddc" d="M8 4h3.500v4.300Q11.500 10.600 8 12.500z"/>`)}</span>
        <span class="slot w30">${b(svg`<path fill="#d5e6e1" d="M8 0a8 8 0 1 1 0 16H1.500L.300 15V8A8 8 0 0 1 8 0z"/><path fill="#0d7a66" d="M8 1.200a6.800 6.800 0 1 1 0 13.600H1.400V8A6.800 6.800 0 0 1 8 1.200z"/><path fill="none" stroke="#fff" stroke-width="1.700" d="M11.300 4.900A4.400 4.400 0 1 0 12.300 9H8.200"/>`)}</span>
        <span class="slot w30">${b(svg`<g fill="none" stroke="#20c35a" stroke-width="1.500"><path d="M.8 8Q4 3.600 8 3.600T15.200 8Q12 12.400 8 12.400T.8 8z"/></g><path fill="#20c35a" d="M8.500 4L5.500 13 3.500 11.500 5 5.500zM10.500 2h2L8.500 14h-2z"/><path stroke="#353535" stroke-width=".9" d="M9.700 2.500L6 13.500"/>`)}</span>
        <span class="slot w30">${b(svg`<path fill="none" stroke="#e8e8e8" stroke-width="1.700" stroke-linejoin="round" d="M.900 2.500h4.800q0-1.700 1.800-1.700t1.800 1.700h4v4q2.200 0 2.200 2t-2.200 2v4.500H.9v-4q2.300 0 2.300-2.200T.9 6.600z"/>`)}</span>
        <span class="slot w35">${b(svg`<path fill="none" stroke="#e8e8e8" stroke-width="1.400" d="M.7 1.500h14.600v13H.7z"/><path fill="#fff" d="M10.500 1h5v14h-5z"/>`)}</span>
        <span class="slot w34">${b(svg`<g fill="none" stroke="#cfcfcf" stroke-width="1.300"><path d="M14 4.500V3q0-1.200-1.200-1.200H2Q.7 1.800.7 3v10q0 1.300 1.300 1.300h12q1.200 0 1.200-1.300V5.700Q15.200 4.500 14 4.500H2.500Q.7 4.500.7 3M15 7.500H9.500q-1.500 0-1.500 1.800t1.500 1.800H15"/></g><circle cx="11" cy="9.300" r=".8" fill="#ccc"/>`)}</span>
        <span class="vpn">${icon(10, 10, "0 0 10 10", svg`<circle cx="5" cy="5" r="5" fill="#8f91a8"/><path stroke="#34353c" stroke-width="1.500" d="M2.200 5h5.600"/>`)}<fit-text w="23.5">VPN</fit-text></span>
        <span class="slot profile">${stripes(16)}</span>
        <span class="slot menu">${b(svg`<path stroke="#e4e4e4" stroke-width="1.300" d="M1 3.500h14M1 8.500h14M1 13.500h14"/>`)}</span>
      </div>
    </div>`;
  }

  private renderBookmarks() {
    return html`<div class="bookmarks">
      <span class="swatch"></span><span class="swatch green"></span><span class="divider"></span>
      <div class="sites">${bookmarks.map((art) => html`<span class="slot">${art}</span>`)}</div>
      <span class="named notion">${notionBadge}<fit-text w="68">WRI | Notion</fit-text></span>
      <span class="named slack">${slack()}<fit-text w="28">Slack</fit-text></span>
      <span class="named spotify">${spotify}<fit-text w="105">F1 Tracks - playlist...</fit-text></span>
      <div class="all"><span class="divider"></span><span class="named">${folder}<fit-text w="76">All Bookmarks</fit-text></span></div>
    </div>`;
  }

  private renderSide() {
    const groups = [["My", "grey"], ["Ac", "blue"], ["BI'", "red"], ["RW", "green-t"]];
    const ring = (art: SVGTemplateResult) =>
      b(svg`<circle cx="8" cy="8" r="7.300" fill="none" stroke="#a9abae" stroke-width="1.200" stroke-dasharray="4.300 1.400"/>${art}`);
    return html`<div class="side">
      <span class="slot side-toggle">${icon(18, 18, "0 0 18 18", svg`<rect x=".8" y=".8" width="16.400" height="16.400" rx="2" fill="none" stroke="#f2f2f2" stroke-width="1.400"/><path stroke="#f2f2f2" stroke-width="1.200" d="M6.800 1v16M2.500 4h2.500M2.500 7h2.500M2.500 10h2.500"/>`)}</span>
      <div class="groups">
        ${groups.map(([label, tone]) => html`<div class="group ${tone}"><span class="bar"></span><span class="group-name">${label}</span></div>`)}
      </div>
      <div class="tabs">
        <span class="slot tab current">${globe(14, "#a7acb1", "#000")}</span>
        <span class="slot tab">${ring(svg`<path fill="#e08b2c" d="M4 11.500V8.500L5.500 7v1.500L7 5l1 2 1-3 1 4 1.500-1v4.500z"/><path fill="#3a3f52" d="M5.500 11.500l1-2 .8 2zM8.500 11.500l.7-3 .8 3z"/><path stroke="#6a7180" d="M5 12.300h6"/>`)}</span>
        <span class="slot tab">${ring(svg`<circle cx="8" cy="8" r="4.600" fill="#4b2a2c"/><path fill="none" stroke="#b3292c" d="M5 6l2-1.500M8.500 4.500l3 2M4.500 9l2 2.500M7 7.500l2.500-1M6 9.500h3l1 2M11 8v2.500"/>`)}</span>
        <span class="slot tab">${b(svg`<path fill="#fbbc04" d="M10.400 1.500H5.600L8 5.500l3 4.500h4.500z"/><path fill="#117a3d" d="M5.600 1.500h4.800L8 5.500z"/><path fill="#1e9e51" d="M.5 10L5.600 1.500 8 5.500 3 14z"/><path fill="#4285f4" d="M3 14l2.400-4h10.100L13 14z"/><path fill="#ea4335" d="M11 10h4.500L13.200 14z"/>`)}</span>
      </div>
      <span class="slot new-tab">${icon(12, 12, "0 0 12 12", svg`<path stroke="#c8c8c8" stroke-width="1.300" d="M6 .5v11M.5 6h11"/>`)}</span>
    </div>`;
  }

  private renderPage() {
    return html`<main class="page">
      <div class="container">
        <h1><fit-text w="303">File Upload</fit-text></h1>
        <div class="label"><fit-text w="211">Gambar Profile</fit-text></div>
        <div class="file">
          <div class="choose"><fit-text w="163">Choose File</fit-text></div>
          <div class="chosen"><fit-text w="298">Screenshot (491).png</fit-text></div>
        </div>
        <button class="upload"><fit-text w="103">Upload</fit-text></button>
      </div>
      <div class="watermark">
        <div><fit-text w="157">Activate Windows</fit-text></div>
        <div class="small"><fit-text w="237">Go to Settings to activate Windows.</fit-text></div>
      </div>
    </main>`;
  }

  private renderTask(task: Task) {
    const classes = { task: true, active: !!task.active, many: task.run === "many" };
    return html`<div class=${classMap(classes)}>
      ${task.art}${task.extra ?? nothing}${task.run || task.active ? html`<span class="run"></span>` : nothing}
    </div>`;
  }

  private renderTaskbar() {
    return html`<div class="taskbar">
      <div class="system">${systemTasks.map((art) => html`<span class="slot">${art}</span>`)}</div>
      <div class="tasks">${tasks.map((task) => this.renderTask(task))}</div>
      <div class="tray">
        ${tray.map((art) => html`<span class="slot">${art}</span>`)}
        <span class="slot pen">${b(svg`<g fill="none" stroke="#fff" stroke-width="1.100"><path d="M4.500 14.500Q4.300 10 10.500 1.800q1.500-1.500 2.400-.2.500 1-.4 2.200Q8 10.500 4.500 14.500zM3.500 9Q-.5 9.500.3 12.300q.6 1.700 4.200 1.700M9.500 12q5.500-2 6-4.200.1-1.500-2-.8"/></g>`)}</span>
        <div class="clock"><fit-text w="27">22:43</fit-text><br /><fit-text w="58">02/06/2024</fit-text></div>
        <div class="notify">
          ${icon(16, 16, "0 0 16 16", svg`<path fill="#fff" d="M0 0h16v13H8l-3 3v-3H0z"/><path stroke="#1c1c1c" stroke-width="1.200" d="M3 3.500h10M3 6.500h10M3 9.500h10"/>`)}
          <span class="notify-count">1</span>
        </div>
        <span class="peek"></span>
      </div>
    </div>`;
  }

  render() {
    return html`<div class="screen">
      ${this.renderTitle()} ${this.renderNav()} ${this.renderBookmarks()}
      <div class="body">${this.renderSide()} ${this.renderPage()}</div>
      ${this.renderTaskbar()}
    </div>`;
  }
}
